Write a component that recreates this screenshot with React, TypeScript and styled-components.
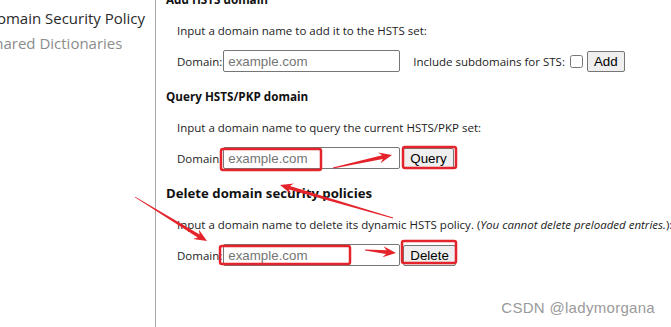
import React from "react";
import styled, { createGlobalStyle } from "styled-components";

const Global = createGlobalStyle`
  html, body { margin: 0; padding: 0; background: #fff; }
  body { overflow: hidden; }
`;

const UI_FONT = `"Open Sans", "Noto Sans", sans-serif`;
const CTRL_FONT = `"Liberation Sans", Arial, sans-serif`;

const Page = styled.div`
  position: relative;
  display: flex;
  width: 671px;
  height: 327px;
  overflow: hidden;
  font-family: ${UI_FONT};
  color: #222;
`;

const Sidebar = styled.nav`
  width: 155px;
  flex: none;
  border-right: 1px solid #a8a8a8;
  overflow: hidden;
`;

const NavList = styled.ul`
  list-style: none;
  margin: 6px 0 0 -14px;
  padding: 0;
  display: flex;
  flex-direction: column;
  gap: 1px;
`;

const NavItem = styled.li<{ $muted?: boolean }>`
  white-space: nowrap;
  font-size: 15px;
  line-height: 24px;
  color: ${(p) => (p.$muted ? "#8c8c8c" : "#2a2a2a")};
`;

const Main = styled.main`
  flex: 1;
  padding-left: 10px;
  overflow: hidden;
`;

const Content = styled.div`
  margin-top: -11px;
  display: flex;
  flex-direction: column;
`;

const Section = styled.section`
  display: flex;
  flex-direction: column;
  margin-bottom: 14px;
`;

const Heading = styled.h4<{ $large?: boolean }>`
  margin: 0;
  font-size: ${(p) => (p.$large ? "13.2px" : "11.7px")};
  font-weight: 700;
  line-height: 20px;
  color: #111;
`;

const Body = styled.div`
  padding-left: 11px;
  display: flex;
  flex-direction: column;
  gap: 9px;
  margin-top: 12px;
`;

const Hint = styled.p`
  margin: 0;
  font-size: 11.5px;
  line-height: 20px;
  white-space: nowrap;
  em { font-style: italic; }
`;

const Row = styled.div`
  display: flex;
  align-items: center;
  height: 22px;
  font-size: 11.5px;
  white-space: nowrap;
`;

const Label = styled.label`
  margin-right: 1px;
`;

const DomainInput = styled.input`
  box-sizing: border-box;
  width: 177px;
  height: 22px;
  padding: 1px 4px;
  border: 1px solid #767676;
  border-radius: 2px;
  font-family: ${CTRL_FONT};
  font-size: 13.33px;
  color: #000;
  outline: none;
  &::placeholder { color: #757575; }
`;

const Spacer = styled.span<{ $w: number }>`
  width: ${(p) => p.$w}px;
  flex: none;
`;

const Check = styled.input`
  width: 13px;
  height: 13px;
  margin: 0 4px 0 5px;
`;

const Button = styled.button`
  box-sizing: border-box;
  height: 21px;
  padding: 1px 6px;
  border: 1px solid #767676;
  border-radius: 2px;
  background: #efefef;
  font-family: ${CTRL_FONT};
  font-size: 13.33px;
  color: #000;
  line-height: 17px;
`;

const Watermark = styled.div`
  position: absolute;
  right: 16px;
  bottom: 11px;
  font-family: ${CTRL_FONT};
  font-size: 15px;
  color: #9a9a9a;
  letter-spacing: 0.3px;
`;

const Overlay = styled.svg`
  position: absolute;
  left: 0;
  top: 0;
  pointer-events: none;
`;

const RED = "#e4232a";

function arrowPoints(x1: number, y1: number, x2: number, y2: number): string {
  const dx = x2 - x1;
  const dy = y2 - y1;
  const len = Math.hypot(dx, dy);
  const ux = dx / len;
  const uy = dy / len;
  const nx = -uy;
  const ny = ux;
  const headLen = 13;
  const headW = 5.5;
  const neckW = 1.8;
  const tailW = 0.4;
  const bx = x2 - ux * headLen;
  const by = y2 - uy * headLen;
  const nb = (w: number) => [nx * w, ny * w];
  const [tnx, tny] = nb(tailW);
  const [nnx, nny] = nb(neckW);
  const [hnx, hny] = nb(headW);
  const ix = x2 - ux * (headLen * 0.75);
  const iy = y2 - uy * (headLen * 0.75);
  const pts = [
    [x1 + tnx, y1 + tny],
    [ix + nnx, iy + nny],
    [bx + hnx, by + hny],
    [x2, y2],
    [bx - hnx, by - hny],
    [ix - nnx, iy - nny],
    [x1 - tnx, y1 - tny],
  ];
  return pts.map((p) => `${p[0].toFixed(1)},${p[1].toFixed(1)}`).join(" ");
}

const rects = [
  { x: 221, y: 149, w: 100, h: 21 },
  { x: 403, y: 147, w: 53, h: 21 },
  { x: 220, y: 246, w: 130, h: 18 },
  { x: 402, y: 241, w: 54, h: 22 },
];

const arrows = [
  [333, 168, 392, 155],
  [393, 218, 280, 185],
  [135, 197, 207, 241],
  [365, 250, 396, 253],
];

function Annotations() {
  return (
    <Overlay width={671} height={327} viewBox="0 0 671 327">
      {rects.map((r, i) => (
        <rect
          key={i}
          x={r.x}
          y={r.y}
          width={r.w}
          height={r.h}
          rx={2}
          fill="none"
          stroke={RED}
          strokeWidth={2.5}
        />
      ))}
      {arrows.map((a, i) => (
        <polygon key={i} points={arrowPoints(a[0], a[1], a[2], a[3])} fill={RED} />
      ))}
    </Overlay>
  );
}

export default function App() {
  return (
    <>
      <Global />
      <Page>
        <Sidebar>
          <NavList>
            <NavItem>Domain Security Policy</NavItem>
            <NavItem $muted>Shared Dictionaries</NavItem>
          </NavList>
        </Sidebar>
        <Main>
          <Content>
            <Section>
              <Heading>Add HSTS domain</Heading>
              <Body>
                <Hint>Input a domain name to add it to the HSTS set:</Hint>
                <Row>
                  <Label>Domain:</Label>
                  <DomainInput placeholder="example.com" />
                  <Spacer $w={13} />
                  <span>Include subdomains for STS:</span>
                  <Check type="checkbox" />
                  <Button>Add</Button>
                </Row>
              </Body>
            </Section>
            <Section>
              <Heading>Query HSTS/PKP domain</Heading>
              <Body>
                <Hint>Input a domain name to query the current HSTS/PKP set:</Hint>
                <Row>
                  <Label>Domain:</Label>
                  <DomainInput placeholder="example.com" />
                  <Spacer $w={3} />
                  <Button>Query</Button>
                </Row>
              </Body>
            </Section>
            <Section>
              <Heading $large>Delete domain security policies</Heading>
              <Body>
                <Hint>
                  Input a domain name to delete its dynamic HSTS policy. (
                  <em>You cannot delete preloaded entries.</em>):
                </Hint>
                <Row>
                  <Label>Domain:</Label>
                  <DomainInput placeholder="example.com" />
                  <Spacer $w={3} />
                  <Button>Delete</Button>
                </Row>
              </Body>
            </Section>
          </Content>
        </Main>
        <Watermark>CSDN @ladymorgana</Watermark>
        <Annotations />
      </Page>
    </>
  );
}
